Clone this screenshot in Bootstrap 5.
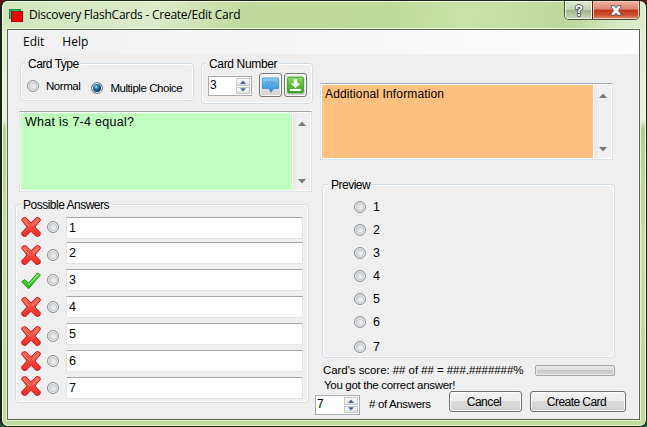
<!DOCTYPE html>
<html lang="en">
<head>
<meta charset="utf-8">
<title>Discovery FlashCards - Create/Edit Card</title>
<link href="https://cdn.jsdelivr.net/npm/bootstrap@5.3.0/dist/css/bootstrap.min.css" rel="stylesheet">
<style>
  body { width: 647px; height: 427px; overflow: hidden; background: linear-gradient(#6a0f12, #2c1614 50%, #2b5a38); font: 12px/14px "Liberation Sans", Arial, sans-serif; color: #000; }
  .win { width: 647px; height: 427px; border: 1px solid #1c2417; border-width: 1px 1px 1px 2px; border-radius: 7px; padding: 0 6px 6px 5px; box-shadow: inset 0 0 0 1px #eef8e0;
    background: linear-gradient(100deg, #d3e5bd 0, #d8e9c6 14%, #dcebca 24%, #c0da9d 38%, #bfdb9a 60%, #c8e2a8 72%, #bdd79c 88%, #dcebca 97%) 0 0/100% 30px no-repeat, linear-gradient(#dcebca 0, #eaf3de 28%, #b0d08c 30%, #c4dfa1 55%, #bfdb9a); }
  .titlebar { height: 28px; }
  .titletext { font: 12px/17px "Open Sans", "Segoe UI", sans-serif; letter-spacing: -.24px; margin: 5px 0 0 4px; }
  .caps { width: 76px; height: 19px; border: 1px solid #46543b; border-top: 0; border-radius: 0 0 5px 5px; overflow: hidden; }
  .cap-help { width: 27px; background: linear-gradient(#dfead3, #c3d4b0 48%, #9fb48b 50%, #c9dbb6); box-shadow: inset 0 0 0 1px #eef6e4; }
  .cap-close { border-left: 1px solid #5a2016; background: linear-gradient(#eeb3a3, #dd8570 46%, #bf3517 50%, #cf5532 80%, #e79a77); box-shadow: inset 0 0 0 1px #f3c5b5; }
  .client { height: 391px; border: 1px solid #59664c; background: #efefef; box-shadow: 0 0 0 1px #e9f4dc; }
  .menu { height: 24px; background: linear-gradient(90deg, #f0f0f0, #fdfdfd); font: 12px/24px "Open Sans", "Segoe UI", sans-serif; padding-left: 15px; gap: 18px; }
  .left { width: 306px; }
  .grp { border: 1px solid #d3dee8; border-radius: 4px; box-shadow: inset 0 0 0 1px #fff; }
  .cap-text { background: #efefef; padding: 0 2px 0 3px; margin: -7px 0 0 4px; line-height: 14px; height: 14px; white-space: nowrap; letter-spacing: -.5px; }
  .tight { font-size: 11.5px; letter-spacing: -.45px; white-space: nowrap; }
  .g-type { width: 174px; height: 38px; margin: 9px 0 0 12px; }
  .g-num { width: 112px; height: 41px; margin: 9px 0 0 7px; }
  .g-num .cap-text { letter-spacing: -.35px; }
  .opt { gap: 7px; height: 14px; }
  .opts { padding: 8px 0 0 6px; gap: 11px; }
  .radio { width: 12px; height: 12px; border-radius: 50%; border: 1px solid #8c8f91; background: radial-gradient(circle at 65% 65%, #f0f1f2 0, #dfe2e5 40%, #c3c8cd 80%); box-shadow: inset 0 0 0 1px #f4f4f4, inset 0 0 0 2px #c4c8cc; flex: none; }
  .radio.on { background: radial-gradient(circle at 42% 38%, #9fe0f8 0, #2c7fae 25%, #0c2f4c 60%, #123b59 68%, #e8f0f5 74%); box-shadow: inset 0 0 0 1px #eef3f6; border-color: #7a8790; }
  .spin { background: #fff; border: 1px solid #a9acb3; padding: 0 1px 1px 1px; height: 20px; width: 45px; font-size: 12px; line-height: 17px; }
  .arrows { width: 14px; margin-top: 1px; gap: 1px; }
  .arrows span { height: 8px; border: 1px solid #c6c9cc; background: linear-gradient(#fafafa, #dfe1e3); display: flex; align-items: center; justify-content: center; }
  .numrow { padding: 2px 0 0 6px; gap: 2px; }
  .numrow .spin { width: 44px; margin: 3px 5px 0 0; }
  .icobtn { width: 23px; height: 24px; border: 1px solid #777; border-radius: 3px; background: linear-gradient(#f3f3f3, #d2d2d2); box-shadow: inset 0 0 0 1px #fcfcfc; padding: 2px; line-height: 0; }
  .icobtn svg { display: block; }
  .memo { width: 293px; border: 1px solid #dfe3ea; border-top-color: #a5a7ad; background: #fff; padding: 1px; }
  .memo .txt { flex: 1; padding: 2px 0 0 4px; line-height: 15px; font-size: 12.5px; letter-spacing: .28px; }
  .m-green { height: 81px; margin: 7px 0 0 11px; }
  .m-green .txt { background: #c1ffc0; }
  .m-orange { height: 77px; margin: 29px 0 0 6px; }
  .m-orange .txt { background: #ffc080; padding-left: 3px; font-size: 12px; letter-spacing: .14px; }
  .bar { width: 17px; margin-left: 1px; background: linear-gradient(90deg, #e5e5e5, #f1f1f1 30%, #efefef); padding: 8px 0 6px; }
  .g-ans { width: 294px; height: 199px; margin: 12px 0 0 7px; }
  .g-ans .cap-text { margin-left: 5px; padding-left: 2px; }
  .arow { height: 27px; padding-left: 5px; }
  .arow .pic { width: 20px; height: 20px; flex: none; }
  .arow .radio { margin-left: 6px; }
  .arow .field { width: 237px; height: 22px; margin-left: 7px; border: 1px solid #dfe3ea; border-top-color: #a5a7ad; background: #fff; border-radius: 1px; padding: 3px 0 0 2px; font-size: 12.5px; }
  .arow.first { height: 25px; margin-top: 5px; }
  .n1 { margin-top: -1px; } .p0 { margin-top: 0; } .p1 { margin-top: 1px; } .p2 { margin-top: 2px; } .p3 { margin-top: 3px; }
  .r4 { margin-top: 4px; } .r5 { margin-top: 5px; } .r7 { margin-top: 7px; }
  .g-prev { width: 293px; height: 174px; margin: 24px 0 0 8px; }
  .g-prev .cap-text { margin-left: 5px; }
  .plist { padding-top: 3px; font-size: 12.5px; }
  .prow { height: 23px; padding-left: 31px; gap: 7px; }
  .prow.last { height: 27px; }
  .foot { margin: 5px 0 0 9px; height: 14px; width: 292px; }
  .score { letter-spacing: -.06px; }
  .verdict { letter-spacing: -.31px; padding-left: 1px; line-height: 16px; }
  .prog { width: 80px; height: 11px; border: 1px solid #a6a6a6; border-radius: 2px; background: linear-gradient(#ececec, #dedede 40%, #c6c6c6 45%, #d6d6d6); box-shadow: inset 0 0 0 1px #e6e6e6; }
  .acts { margin-left: 1px; height: 25px; }
  .acts .spin { margin-top: 4px; }
  .acts .tight { margin: 6px 0 0 9px; width: 80px; letter-spacing: -.35px; }
  .pbtn { height: 21px; border: 1px solid #707070; border-radius: 3px; background: linear-gradient(#f4f4f4, #ebebeb 48%, #dcdcdc 50%, #cfcfcf); box-shadow: inset 0 0 0 1px #fbfbfb; font: inherit; padding: 0 3px 0 0; line-height: 18px; color: #000; letter-spacing: -.45px; }
  .cancel { width: 73px; margin-right: 8px; }
  .create { width: 96px; letter-spacing: -.55px; }
</style>
</head>
<body>
<svg width="0" height="0" class="position-absolute">
  <defs>
    <linearGradient id="rg" x2="0" y2="1"><stop stop-color="#ff6a55"/><stop offset="1" stop-color="#ee2a24"/></linearGradient>
    <linearGradient id="gg" x2="0" y2="1"><stop stop-color="#6be04e"/><stop offset="1" stop-color="#22b81c"/></linearGradient>
    <linearGradient id="bg" x2="0" y2="1"><stop stop-color="#8fd0f6"/><stop offset=".5" stop-color="#52abe8"/><stop offset="1" stop-color="#2f86cf"/></linearGradient>
    <linearGradient id="dg" x2="0" y2="1"><stop stop-color="#86d65a"/><stop offset="1" stop-color="#3da424"/></linearGradient>
    <symbol id="cross" viewBox="0 0 20 20"><path d="M.7 3.400Q.7 .7 3.400 .7H4.700L10 5.900 15.300 .7H17Q19.400 .7 19.400 3.400L13.900 10 19.300 15.800Q19.600 19.300 16.600 19.400H15.100L10 14.200 4.900 19.400H3.400Q.4 19.300 .7 15.800L6.100 10Z" fill="url(#rg)" stroke="#c4161c"/><path d="M2.600 3.400L8.400 9.600M17 3.200L11.400 9" stroke="#ff9a86" fill="none"/></symbol>
    <symbol id="tick" viewBox="0 0 20 20"><path d="M.6 10.800L3.800 8.600 7.400 12.200 16.600 2 19.400 3.800 7.600 17.800Z" fill="url(#gg)" stroke="#1d9a17" stroke-linejoin="round"/><path d="M7.400 14L17.400 3.600" stroke="#a4f08c"/></symbol>
    <symbol id="up" viewBox="0 0 8 5"><path d="M0 5L4 .5 8 5Z"/></symbol>
    <symbol id="dn" viewBox="0 0 8 5"><path d="M0 0L4 4.500 8 0Z"/></symbol>
  </defs>
</svg>
<div class="win">
  <div class="titlebar d-flex align-items-start">
    <svg class="mt-2" width="18" height="13" viewBox="-2 0 18 13"><rect x=".5" y=".5" width="11" height="9" fill="#17c76a" stroke="#0b8a48"/><rect x="2.500" y="2.500" width="11" height="10" fill="#f00000" stroke="#a80d0d"/></svg>
    <span class="titletext">Discovery FlashCards - Create/Edit Card</span>
    <div class="caps d-flex ms-auto">
      <div class="cap-help d-flex align-items-center justify-content-center"><svg width="10" height="13" viewBox="0 0 10 13"><g fill="none" stroke-linecap="square"><path d="M2.500 4V3Q5 1 7.500 3V4.500L5 6.500V8M5 10.800V11" stroke="#4a5060" stroke-width="3.400"/><path d="M2.500 4V3Q5 1 7.500 3V4.500L5 6.500V8M5 10.800V11" stroke="#fff" stroke-width="1.800"/></g></svg></div>
      <div class="cap-close flex-fill d-flex align-items-center justify-content-center"><svg width="12" height="11" viewBox="0 0 12 11"><path d="M1 .7H4.400L6 2.800 7.600.700H11V2L8.400 5.500 11 9V10.300H7.600L6 8.200 4.400 10.300H1V9L3.600 5.500 1 2Z" fill="#fff" stroke="#55566a"/></svg></div>
    </div>
  </div>
  <div class="client">
    <div class="menu d-flex"><span>Edit</span><span>Help</span></div>
    <div class="d-flex">
      <div class="left">
        <div class="d-flex">
          <div class="g-type grp">
            <div class="d-flex"><span class="cap-text">Card Type</span></div>
            <div class="opts d-flex">
              <label class="opt d-flex"><span class="radio p1"></span><span class="tight">Normal</span></label>
              <label class="opt d-flex p2"><span class="radio on p1"></span><span class="tight">Multiple Choice</span></label>
            </div>
          </div>
          <div class="g-num grp">
            <div class="d-flex"><span class="cap-text">Card Number</span></div>
            <div class="numrow d-flex">
              <div class="spin d-flex justify-content-between"><span>3</span><div class="arrows d-flex flex-column"><span><svg width="6" height="4" fill="#4a62a0"><use href="#up"/></svg></span><span><svg width="6" height="4" fill="#4a62a0"><use href="#dn"/></svg></span></div></div>
              <button class="icobtn" aria-label="Comment"><svg width="17" height="18" viewBox="0 0 17 18"><path d="M.5 2H16.500V12.500H11.500L9 16.500 7 12.500H.5Z" fill="url(#bg)" stroke="#3b8fd2" stroke-width=".8" stroke-linejoin="round"/><g fill="#b9e2fb" stroke="#2878ba" stroke-width=".7"><circle cx="5" cy="7" r="1.200"/><circle cx="8.500" cy="7" r="1.200"/><circle cx="12" cy="7" r="1.200"/></g></svg></button>
              <button class="icobtn" aria-label="Save"><svg width="17" height="18" viewBox="0 0 17 18"><rect x=".5" y="1" width="16" height="16" rx="1.500" fill="url(#dg)" stroke="#3a9a22" stroke-width=".8"/><path d="M6.800 3H10.200V7.500H13.200L8.500 12 3.800 7.500H6.800ZM3 13H14V15H3Z" fill="#fff"/></svg></button>
            </div>
          </div>
        </div>
        <div class="memo m-green d-flex">
          <div class="txt">What is 7-4 equal?</div>
          <div class="bar d-flex flex-column justify-content-between align-items-center"><svg width="8" height="5" fill="#777"><use href="#up"/></svg><svg width="8" height="5" fill="#777"><use href="#dn"/></svg></div>
        </div>
        <div class="g-ans grp">
          <div class="d-flex"><span class="cap-text">Possible Answers</span></div>
          <div class="arow first d-flex align-items-start"><svg class="pic p0"><use href="#cross"/></svg><span class="radio r4"></span><div class="field">1</div></div>
          <div class="arow d-flex align-items-start"><svg class="pic p3"><use href="#cross"/></svg><span class="radio r7"></span><div class="field">2</div></div>
          <div class="arow d-flex align-items-start"><svg class="pic p2"><use href="#tick"/></svg><span class="radio r5"></span><div class="field">3</div></div>
          <div class="arow d-flex align-items-start"><svg class="pic p1"><use href="#cross"/></svg><span class="radio r5"></span><div class="field">4</div></div>
          <div class="arow d-flex align-items-start"><svg class="pic p3"><use href="#cross"/></svg><span class="radio r7"></span><div class="field">5</div></div>
          <div class="arow d-flex align-items-start"><svg class="pic p1"><use href="#cross"/></svg><span class="radio r5"></span><div class="field">6</div></div>
          <div class="arow d-flex align-items-start"><svg class="pic n1"><use href="#cross"/></svg><span class="radio r5"></span><div class="field">7</div></div>
        </div>
      </div>
      <div class="flex-fill">
        <div class="memo m-orange d-flex">
          <div class="txt">Additional Information</div>
          <div class="bar d-flex flex-column justify-content-between align-items-center"><svg width="8" height="5" fill="#777"><use href="#up"/></svg><svg width="8" height="5" fill="#777"><use href="#dn"/></svg></div>
        </div>
        <div class="g-prev grp">
          <div class="d-flex"><span class="cap-text">Preview</span></div>
          <div class="plist">
            <div class="prow d-flex align-items-center"><span class="radio"></span>1</div>
            <div class="prow d-flex align-items-center"><span class="radio"></span>2</div>
            <div class="prow d-flex align-items-center"><span class="radio"></span>3</div>
            <div class="prow d-flex align-items-center"><span class="radio"></span>4</div>
            <div class="prow d-flex align-items-center"><span class="radio"></span>5</div>
            <div class="prow d-flex align-items-center"><span class="radio"></span>6</div>
            <div class="prow last d-flex align-items-center"><span class="radio"></span>7</div>
          </div>
        </div>
        <div class="foot d-flex justify-content-between align-items-center"><span class="tight score">Card's score: ## of ## = ###.#######%</span><div class="prog"></div></div>
        <div class="foot mt-0"><span class="tight verdict">You got the correct answer!</span></div>
        <div class="acts d-flex align-items-start">
          <div class="spin d-flex justify-content-between"><span>7</span><div class="arrows d-flex flex-column"><span><svg width="6" height="4" fill="#4a62a0"><use href="#up"/></svg></span><span><svg width="6" height="4" fill="#4a62a0"><use href="#dn"/></svg></span></div></div>
          <span class="tight"># of Answers</span>
          <button class="pbtn cancel">Cancel</button><button class="pbtn create">Create Card</button>
        </div>
      </div>
    </div>
  </div>
</div>
</body>
</html>
